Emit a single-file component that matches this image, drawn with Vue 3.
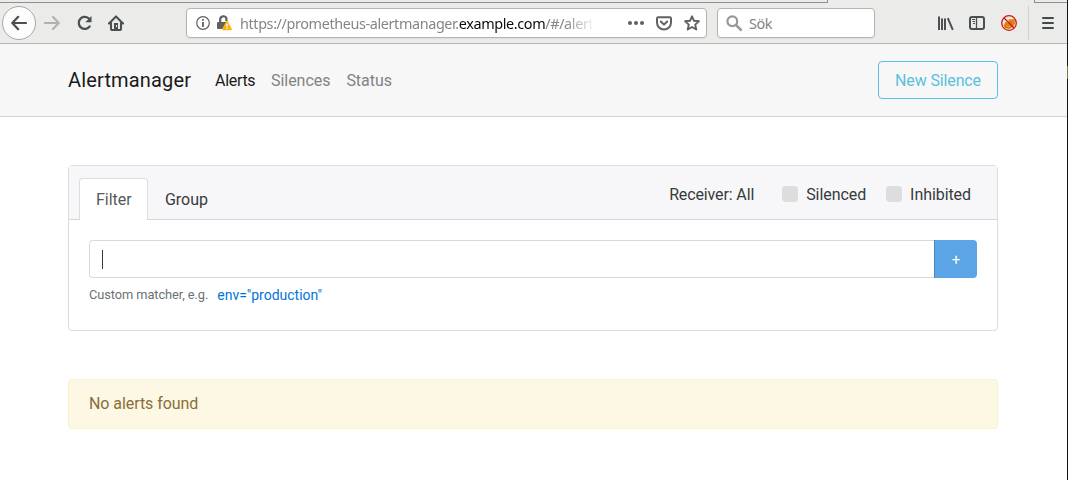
<script setup>
import { ref } from 'vue'

const links = ['Alerts', 'Silences', 'Status']
const activeLink = ref('Alerts')
const toggles = ['Silenced', 'Inhibited']
</script>

<template>
  <div class="window">
    <header class="browser">
      <i class="tab-edge left"></i>
      <i class="tab-edge right"></i>
      <div class="back">
        <svg width="16" height="16" viewBox="0 0 16 16"><path d="M7.2 1.8 1.3 8l5.900 6.200M2 8h13" fill="none" stroke="#4a4f52" stroke-width="2.200" stroke-linecap="round" stroke-linejoin="round" /></svg>
      </div>
      <svg class="forward" width="16" height="16" viewBox="0 0 16 16"><path d="M9 2l5.800 6L9 14M14.500 8H1" fill="none" stroke="#b0b1b1" stroke-width="2.100" stroke-linecap="round" stroke-linejoin="round" /></svg>
      <svg class="reload" width="16" height="16" viewBox="0 0 16 16"><path d="M11.500 3.200A6 6 0 1 0 12.700 11.300" fill="none" stroke="#4a4f52" stroke-width="2.200" stroke-linecap="round" /><path d="M14.500 1v6.200H8.300z" fill="#4a4f52" /></svg>
      <svg class="home" width="16" height="16" viewBox="0 0 16 16"><path d="M1 8.400 8 1.400l7 7M3 8v5.800q0 1.200 1 1.200h8q1 0 1-1.200V8" fill="none" stroke="#4a4f52" stroke-width="2.100" stroke-linecap="round" stroke-linejoin="round" /><path d="M6 8h4v6H6z" fill="#4a4f52" /><path d="M8 10h1v2H8z" fill="#ebebe9" /></svg>
      <div class="address">
        <svg class="info" width="14" height="14" viewBox="0 0 14 14"><circle cx="7" cy="7" r="6.300" fill="none" stroke="#606060" stroke-width="1.200" /><path d="M6.100 3h1.800v1.700H6.100zM6.100 6h1.800v5H6.100z" fill="#606060" /></svg>
        <svg class="lock" width="15" height="16" viewBox="0 0 15 16"><path d="M3.200 7V4.200a3.200 3.200 0 0 1 6.200-.8V6" fill="none" stroke="#606060" stroke-width="2.200" /><path d="M1 7h9v7H1q-1 0-1-1V8q0-1 1-1z" fill="#606060" /><path d="M9.300 6.200q.7-.8 1.300 0l4 7.400q.5 1.400-.9 1.600H6.100q-1.300-.3-.8-1.600z" fill="#fdb20e" /><path d="M9.200 8.800h1.500v2.800H9.200zM9.200 12.400h1.500v1.300H9.200z" fill="#fff" /></svg>
        <div class="url">https://prometheus-alertmanager.<b>example.com</b>/#/alert</div>
        <svg class="dots" width="16" height="4" viewBox="0 0 16 4"><g fill="#606060"><circle cx="2" cy="2" r="2" /><circle cx="8" cy="2" r="2" /><circle cx="14" cy="2" r="2" /></g></svg>
        <svg class="pocket" width="16" height="15" viewBox="0 0 16 15"><path d="M2.200 1.200h11.600q1.200 0 1.200 1.200v4.100a7 7 0 0 1-14 0V2.400q0-1.200 1.200-1.200z" fill="none" stroke="#606060" stroke-width="2" /><path d="M4.800 5.500 8 8.600l3.200-3.100" fill="none" stroke="#606060" stroke-width="2" stroke-linecap="round" stroke-linejoin="round" /></svg>
        <svg class="star" width="16" height="16" viewBox="0 0 16 16"><path d="M8 1.300l2 4.500 4.900.5-3.700 3.300 1.100 4.900L8 12l-4.300 2.500 1.100-4.900L1.100 6.300l4.900-.5z" fill="none" stroke="#606060" stroke-width="1.900" stroke-linejoin="round" /></svg>
      </div>
      <div class="search">
        <svg width="17" height="17" viewBox="0 0 17 17"><circle cx="6.300" cy="6.300" r="4.900" fill="none" stroke="#989898" stroke-width="2.200" /><path d="m10 10 5.600 5.600" stroke="#989898" stroke-width="2.500" /></svg>
        <span>Sök</span>
      </div>
      <svg class="library" width="16" height="15" viewBox="0 0 16 15"><path d="M1 .5v13.500M4 2.500V14M7 2.500V14M9.800 2.200 14.800 13.800" fill="none" stroke="#4a4f52" stroke-width="2" /></svg>
      <svg class="sidebar" width="16" height="14" viewBox="0 0 16 14"><rect x="1" y="1" width="14" height="12" rx="2" fill="none" stroke="#4a4f52" stroke-width="2" /><path d="M7.500 1v12" stroke="#4a4f52" stroke-width="1.300" /><path d="M3 3.500h3M3.500 5.500H6M4 7.500h2" stroke="#4a4f52" /></svg>
      <svg class="blocked" width="16" height="16" viewBox="0 0 16 16"><circle cx="8" cy="8" r="7" fill="#f3e9df" /><path d="M2.500 10.500l2-3.500 2.500.5L8 4l3 .500 2.500-1 .5 5-2 3.500-4 2-4-1z" fill="#dc860f" /><path d="M8 7h2v1.500H8zM4 11.500l4 1.500 3-2" fill="#f3a61a" stroke="#9a5c16" stroke-width=".5" /><circle cx="8" cy="8" r="7.300" fill="none" stroke="#d11317" stroke-width="1.300" /><path d="m3 3 10 10" stroke="#d11317" stroke-width="1.300" /></svg>
      <i class="divider"></i>
      <svg class="menu" width="12" height="12" viewBox="0 0 12 12"><path d="M1 1h10M1 6h10M1 11h10" stroke="#43484b" stroke-width="2" stroke-linecap="round" /></svg>
    </header>

    <nav class="navbar">
      <span class="brand">Alertmanager</span>
      <a v-for="link in links" :key="link" :class="{ active: link === activeLink }">{{ link }}</a>
      <button class="new-silence">New Silence</button>
    </nav>

    <main>
      <section class="card">
        <div class="card-header">
          <div class="tab selected">Filter</div>
          <div class="tab">Group</div>
          <div class="receiver">Receiver: All</div>
          <label v-for="toggle in toggles" :key="toggle"><i></i>{{ toggle }}</label>
        </div>
        <div class="card-body">
          <div class="input-row">
            <div class="matcher"><i></i></div>
            <button class="add">+</button>
          </div>
          <div class="hint">Custom matcher, e.g.<a>env="production"</a></div>
        </div>
      </section>
      <div class="notice">No alerts found</div>
    </main>
    <i class="desktop-edge"></i>
  </div>
</template>

<style>
body {
  margin: 0;
  overflow: hidden;
}
</style>

<style scoped>
* {
  box-sizing: border-box;
}
.window {
  position: relative;
  width: 1068px;
  height: 480px;
  overflow: hidden;
  background: #fff;
  color: #373a3c;
  font: 16px/24px Roboto, sans-serif;
  letter-spacing: -0.04px;
}
svg {
  display: block;
  flex: none;
}
.browser {
  position: relative;
  display: flex;
  align-items: center;
  height: 44px;
  padding: 3px 13px 0 2px;
  background: #ebebe9;
  border-bottom: 1px solid #b4b5b3;
}
.tab-edge {
  position: absolute;
  top: 0;
  height: 3px;
  border-bottom: 1px solid #8e8f8d;
}
.tab-edge.left {
  left: 0;
  width: 828px;
  border-right: 1px solid #8e8f8d;
}
.tab-edge.right {
  left: 1034px;
  right: 0;
  border-left: 1px solid #8e8f8d;
}
.back {
  display: grid;
  place-items: center;
  width: 34px;
  height: 34px;
  border: 1px solid #a8a8a7;
  border-radius: 50%;
  background: #fcfcfc;
}
.forward {
  margin-left: 8px;
}
.reload {
  margin-left: 17px;
}
.home {
  margin-left: 15px;
}
.address,
.search {
  display: flex;
  align-items: center;
  height: 30px;
  border: 1px solid #b4b4b3;
  border-radius: 4px;
  background: #fff;
  box-shadow: 0 1px 2px rgba(0, 0, 0, 0.06);
  font: 14.4px/27px "Noto Sans", sans-serif;
  letter-spacing: -0.38px;
  color: #858585;
}
.address {
  width: 521px;
  margin-left: 62px;
  padding-left: 9px;
}
.lock {
  margin-left: 7px;
}
.url {
  width: 353px;
  margin-left: 8px;
  white-space: nowrap;
  mask-image: linear-gradient(to right, #000 325px, transparent 356px);
}
.url b {
  font-weight: 400;
  color: #0c0c0c;
}
.dots {
  margin-left: 35px;
}
.pocket {
  margin-left: 12px;
}
.star {
  margin-left: 12px;
}
.search {
  width: 158px;
  margin-left: 10px;
  padding-left: 8px;
}
.search span {
  margin-left: 6px;
}
.library {
  margin-left: 63px;
}
.sidebar {
  margin-left: 15px;
}
.blocked {
  margin-left: 16px;
}
.divider {
  width: 1px;
  height: 34px;
  margin-left: 11px;
  background: #cfcfce;
}
.menu {
  margin-left: 13px;
}
.navbar {
  display: flex;
  align-items: center;
  height: 73px;
  padding: 0 70px 0 68px;
  background: #f7f7f7;
  border-bottom: 1px solid #d4d4d4;
}
.brand {
  width: 123px;
  margin-right: 24px;
  font-size: 20px;
  letter-spacing: 0.15px;
  color: #1a1a1a;
}
.navbar a {
  margin-right: 16px;
  padding-top: 2px;
  color: #828282;
}
.navbar a.active {
  width: 40px;
  letter-spacing: -0.3px;
  color: #1a1a1a;
}
.new-silence {
  width: 120px;
  height: 38px;
  margin-left: auto;
  padding: 2px 0 0;
  border: 1px solid #5bc0de;
  border-radius: 4px;
  background: transparent;
  color: #5bc0de;
  font: inherit;
  letter-spacing: -0.13px;
}
main {
  padding: 48px 70px 0 68px;
}
.card {
  height: 166px;
  border: 1px solid #dcdcdd;
  border-radius: 4px;
}
.card-header {
  display: flex;
  height: 54px;
  padding: 12px 26px 0 10px;
  background: #f7f7f9;
  border-bottom: 1px solid #d6d6d7;
}
.tab {
  height: 42px;
  padding: 9px 16px;
  border: 1px solid transparent;
  color: #373a3c;
}
.tab.selected {
  width: 69px;
  border-color: #ddd;
  border-bottom: 0;
  border-radius: 4px 4px 0 0;
  background: #fff;
  color: #55595c;
}
.receiver {
  margin: 5px 8px 0 auto;
  letter-spacing: -0.13px;
}
label {
  display: flex;
  align-items: center;
  height: 24px;
  margin: 4px 0 0 20px;
  padding-top: 2px;
  letter-spacing: -0.07px;
}
label i {
  width: 16px;
  height: 16px;
  margin: -2px 8px 0 0;
  border-radius: 4px;
  background: #ddd;
}
.card-body {
  padding: 20px;
}
.input-row {
  display: flex;
  height: 38px;
}
.matcher {
  flex: 1;
  padding: 9px 12px;
  border: 1px solid #d9d9d9;
  border-right: 0;
  border-radius: 4px 0 0 4px;
}
.matcher i {
  display: block;
  width: 1px;
  height: 19px;
  background: #33383b;
}
.add {
  width: 43px;
  padding: 1px 0 0;
  border: 0;
  border-left: 1px solid #4489c4;
  border-radius: 0 4px 4px 0;
  background: #5ba4e5;
  color: #fff;
  font: inherit;
  font-size: 15px;
}
.hint {
  display: flex;
  align-items: center;
  height: 24px;
  margin-top: 5px;
  font-size: 12.8px;
  letter-spacing: -0.07px;
  color: #6b7176;
}
.hint a {
  margin-left: 9px;
  font-size: 14px;
  letter-spacing: 0;
  color: #0275d8;
}
.notice {
  height: 50px;
  margin-top: 48px;
  padding: 12px 20px;
  border: 1px solid #faf2cc;
  border-radius: 4px;
  background: #fcf8e3;
  color: #8a6d3b;
  letter-spacing: -0.07px;
}
.desktop-edge {
  position: absolute;
  top: 0;
  right: 0;
  width: 1px;
  height: 480px;
  background: linear-gradient(#111417 66px, #668040 66px, #668040 79px, #111417 79px);
}
</style>
